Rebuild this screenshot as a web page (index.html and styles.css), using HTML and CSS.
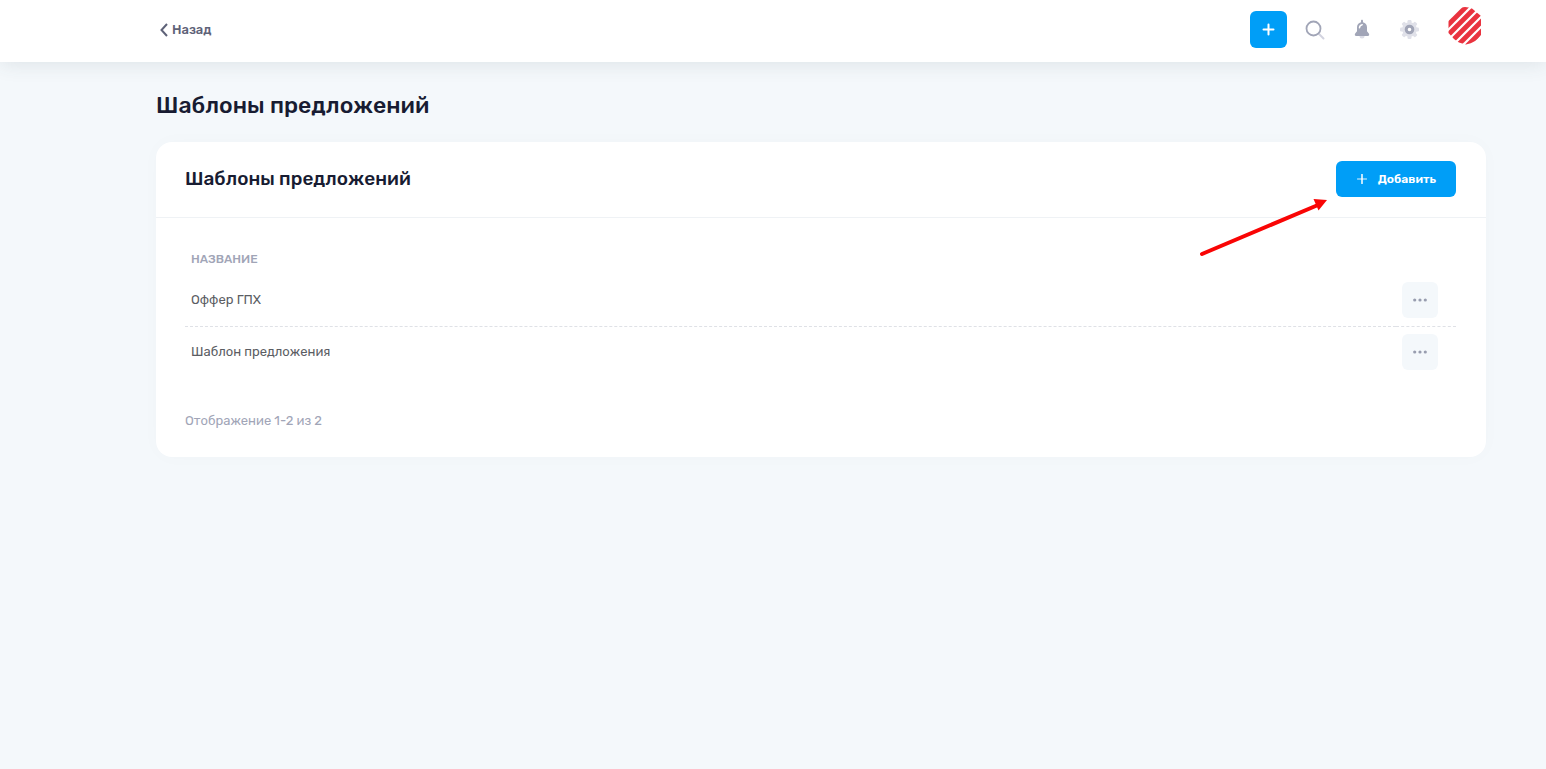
FILE: index.html
```html
<!DOCTYPE html>
<html lang="ru">

<head>
    <meta charset="UTF-8">
    <meta name="viewport" content="width=device-width, initial-scale=1.0">
    <title>Шаблоны предложений</title>
    <link rel="stylesheet" href="styles.css">
</head>

<body>
    <header class="header">
        <a class="back" href="#">
            <svg width="8" height="14" viewBox="0 0 8 14">
                <path d="M7 1 1.500 7 7 13" fill="none" stroke="currentColor" stroke-width="2" />
            </svg>
            Назад
        </a>

        <div class="tools">
            <button class="tool tool-add" type="button" aria-label="Создать">
                <svg width="13" height="13" viewBox="0 0 13 13">
                    <path d="M6.500 1.500v10M1.500 6.500h10" stroke="#fff" stroke-width="2" stroke-linecap="round" />
                </svg>
            </button>
            <button class="tool" type="button" aria-label="Поиск">
                <svg width="21" height="21" viewBox="0 0 21 21" fill="none">
                    <path d="M14 15l4.500 4.500" stroke="#d2d3df" stroke-width="2" stroke-linecap="round" />
                    <circle cx="8.500" cy="9.500" r="7" stroke="#a1a5b7" stroke-width="1.800" />
                </svg>
            </button>
            <button class="tool" type="button" aria-label="Уведомления">
                <svg width="21" height="21" viewBox="0 0 21 21">
                    <path d="M7.500 17h5a2.500 2.500 0 0 1-5 0z" fill="#dcdde6" />
                    <path d="M10 .8c.7 0 1 .5 1 1.200v1.300c2.500.5 4 2.600 4 5v4l1.800 2.200c.8 1.100.3 2.500-.9 2.500H4.100c-1.200 0-1.700-1.400-.9-2.500L5 12.300v-4c0-2.400 1.500-4.500 4-5V2c0-.7.3-1.200 1-1.200z" fill="#a1a5b7" />
                    <path d="M7.500 8.800c.1-1.800 1-2.900 2.700-3.100" fill="none" stroke="#fff" stroke-width="1.500" stroke-linecap="round" />
                </svg>
            </button>
            <button class="tool" type="button" aria-label="Настройки">
                <svg width="21" height="21" viewBox="-10.500 -10.500 21 21">
                    <g fill="#e0e1e9">
                        <circle r="7.300" />
                        <rect x="-2" y="-9.500" width="4" height="19" rx="1.200" />
                        <rect x="-2" y="-9.500" width="4" height="19" rx="1.200" transform="rotate(45)" />
                        <rect x="-2" y="-9.500" width="4" height="19" rx="1.200" transform="rotate(90)" />
                        <rect x="-2" y="-9.500" width="4" height="19" rx="1.200" transform="rotate(135)" />
                    </g>
                    <circle r="3.300" fill="#fff" stroke="#a1a5b7" stroke-width="3" />
                </svg>
            </button>
            <a class="avatar" href="#" aria-label="Профиль">
                <svg width="38" height="38" viewBox="0 0 38 38">
                    <defs>
                        <clipPath id="round">
                            <path d="M10 1.500Q17-1.500 24 1.500L33 9V28Q28 36 18 37.500Q10 36 6 32L.5 26V13Q4 5 10 1.500z" />
                        </clipPath>
                    </defs>
                    <g clip-path="url(#round)" stroke="#e9333f" stroke-width="4.800">
                        <path d="M-3 12 12-3" stroke-width="1" />
                        <path d="M-5 23 23-5" />
                        <path d="M-5 33 33-5" />
                        <path d="M-2 40 40-2" />
                        <path d="M2 46 46 2" />
                        <path d="M8 50 50 8" />
                    </g>
                </svg>
            </a>
        </div>
    </header>

    <main class="content">
        <h1 class="page-title">Шаблоны предложений</h1>

        <section class="card">
            <div class="card-head">
                <h2 class="card-title">Шаблоны предложений</h2>
                <div class="add-wrap">
                    <button class="btn" type="button">
                        <svg width="10" height="10" viewBox="0 0 10 10">
                            <path d="M.5 5h9" stroke="#fff" stroke-width="1.500" stroke-linecap="round" opacity=".6" />
                            <path d="M5 .5v9" stroke="#fff" stroke-width="1.500" stroke-linecap="round" />
                        </svg>
                        Добавить
                    </button>
                    <svg class="arrow" width="130" height="62" viewBox="0 0 130 62">
                        <path d="M4 58 120 9" stroke="#f90505" stroke-width="4" stroke-linecap="round" />
                        <path d="M129 4 115.500 3 120.500 14.500z" fill="#f90505" />
                    </svg>
                </div>
            </div>

            <div class="card-body">
                <table class="table">
                    <thead>
                        <tr>
                            <th>Название</th>
                            <th></th>
                        </tr>
                    </thead>
                    <tbody>
                        <tr>
                            <td>Оффер ГПХ</td>
                            <td class="actions">
                                <button class="more" type="button" aria-label="Действия">
                                    <svg width="14" height="4" viewBox="0 0 14 4" fill="#989daf">
                                        <circle cx="1.700" cy="2" r="1.600" />
                                        <circle cx="7" cy="2" r="1.600" />
                                        <circle cx="12.300" cy="2" r="1.600" />
                                    </svg>
                                </button>
                            </td>
                        </tr>
                        <tr>
                            <td>Шаблон предложения</td>
                            <td class="actions">
                                <button class="more" type="button" aria-label="Действия">
                                    <svg width="14" height="4" viewBox="0 0 14 4" fill="#989daf">
                                        <circle cx="1.700" cy="2" r="1.600" />
                                        <circle cx="7" cy="2" r="1.600" />
                                        <circle cx="12.300" cy="2" r="1.600" />
                                    </svg>
                                </button>
                            </td>
                        </tr>
                    </tbody>
                </table>
                <p class="summary">Отображение 1-2 из 2</p>
            </div>
        </section>
    </main>
</body>

</html>
```
FILE: styles.css
```css
* {
    box-sizing: border-box;
}

body {
    margin: 0;
    min-height: 100vh;
    background: #f4f8fb;
    font-family: Rubik, Roboto, sans-serif;
    font-size: 13px;
    line-height: 20px;
    color: #5e6278;
}

svg {
    display: block;
}

button {
    border: none;
    padding: 0;
    font-family: inherit;
    cursor: pointer;
}

.header {
    display: flex;
    justify-content: space-between;
    align-items: center;
    padding: 11px 60px 14px 156px;
    background: #fff;
    box-shadow: 0 2px 20px rgba(60, 75, 85, .12);
}

.back {
    display: flex;
    align-items: center;
    gap: 4px;
    padding-left: 4px;
    font-size: 13px;
    font-weight: 500;
    color: #5e6278;
    text-decoration: none;
}

.tools {
    display: flex;
    align-items: center;
    gap: 10px;
}

.tool {
    display: flex;
    align-items: center;
    justify-content: center;
    width: 37px;
    height: 37px;
    border-radius: 6px;
    background: transparent;
}

.tool-add {
    background: #009ef7;
}

.avatar {
    margin: -4px 0 3px 10px;
}

.content {
    padding: 28px 60px 28px 156px;
}

.page-title {
    margin: 0 0 22px;
    font-size: 23px;
    line-height: 30px;
    font-weight: 500;
    color: #181c32;
}

.card {
    background: #fff;
    border-radius: 16px;
    box-shadow: 0 0 20px rgba(76, 87, 125, .02);
}

.card-head {
    display: flex;
    align-items: center;
    justify-content: space-between;
    padding: 19px 30px 20px 29px;
    border-bottom: 1px solid #eff2f5;
}

.card-title {
    margin: 0;
    font-size: 19px;
    line-height: 30px;
    font-weight: 500;
    color: #181c32;
}

.add-wrap {
    position: relative;
}

.btn {
    display: flex;
    align-items: center;
    justify-content: flex-end;
    gap: 11px;
    min-width: 120px;
    height: 36px;
    padding: 0 20px;
    border-radius: 6px;
    background: #009ef7;
    color: #fff;
    font-size: 12px;
    font-weight: 600;
}

/* pointer to the add button */
.arrow {
    position: absolute;
    right: 128px;
    top: 35px;
    pointer-events: none;
}

.card-body {
    padding: 27px 30px 26px 29px;
}

.table {
    width: 100%;
    border-collapse: collapse;
}

.table th {
    height: 29px;
    padding: 0 6px 2px;
    text-align: left;
    text-transform: uppercase;
    font-size: 12px;
    font-weight: 500;
    color: #a1a5b7;
}

.table td {
    height: 52px;
    padding: 0 6px;
    color: #5b5d63;
}

.table tbody tr + tr td {
    border-top: 1px dashed #dfe1e6;
}

.table .actions {
    width: 60px;
    padding: 0 18px 0 6px;
}

.more {
    display: flex;
    align-items: center;
    justify-content: center;
    width: 36px;
    height: 36px;
    border-radius: 6px;
    background: #f4f8fb;
}

.summary {
    margin: 33px 0 0;
    color: #a1a5b7;
}
```
